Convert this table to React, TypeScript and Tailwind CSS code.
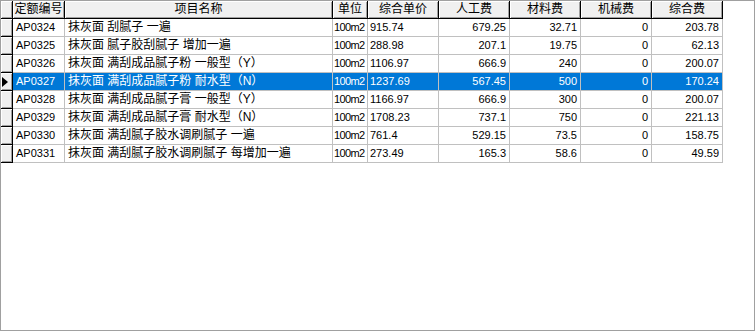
import React from 'react';

type Col = { title: string; width: string; align: string };

const columns: Col[] = [
  { title: '定额编号', width: 'w-[52px]', align: 'text-left pl-[3px] text-[11px]' },
  { title: '项目名称', width: 'w-[268px]', align: 'text-left pl-[3px] text-[12px]' },
  { title: '单位', width: 'w-[35px]', align: 'text-left pl-[1px] text-[11px] tracking-[-0.6px]' },
  { title: '综合单价', width: 'w-[71px]', align: 'text-left pl-[2px] text-[11px]' },
  { title: '人工费', width: 'w-[71px]', align: 'text-right pr-[3px] text-[11px]' },
  { title: '材料费', width: 'w-[71px]', align: 'text-right pr-[3px] text-[11px]' },
  { title: '机械费', width: 'w-[71px]', align: 'text-right pr-[3px] text-[11px]' },
  { title: '综合费', width: 'w-[71px]', align: 'text-right pr-[3px] text-[11px]' },
];

const rows: string[][] = [
  ['AP0324', '抹灰面 刮腻子 一遍', '100m2', '915.74', '679.25', '32.71', '0', '203.78'],
  ['AP0325', '抹灰面 腻子胶刮腻子 增加一遍', '100m2', '288.98', '207.1', '19.75', '0', '62.13'],
  ['AP0326', '抹灰面 满刮成品腻子粉 一般型（Y）', '100m2', '1106.97', '666.9', '240', '0', '200.07'],
  ['AP0327', '抹灰面 满刮成品腻子粉 耐水型（N）', '100m2', '1237.69', '567.45', '500', '0', '170.24'],
  ['AP0328', '抹灰面 满刮成品腻子膏 一般型（Y）', '100m2', '1166.97', '666.9', '300', '0', '200.07'],
  ['AP0329', '抹灰面 满刮成品腻子膏 耐水型（N）', '100m2', '1708.23', '737.1', '750', '0', '221.13'],
  ['AP0330', '抹灰面 满刮腻子胶水调刷腻子 一遍', '100m2', '761.4', '529.15', '73.5', '0', '158.75'],
  ['AP0331', '抹灰面 满刮腻子胶水调刷腻子 每增加一遍', '100m2', '273.49', '165.3', '58.6', '0', '49.59'],
];

const selected = 3;

const fixedCell =
  'shrink-0 h-[18px] bg-[#f0f0f0] border-r border-b border-black shadow-[inset_1px_1px_0_#ffffff,inset_-1px_-1px_0_#a0a0a0]';

export default function App() {
  return (
    <div
      className="w-[755px] h-[331px] bg-white border border-[#a0a0a0] overflow-hidden text-black"
      style={{ fontFamily: '"Liberation Sans", "Noto Sans CJK SC", sans-serif' }}
    >
      {/* header */}
      <div className="flex">
        <div className={`${fixedCell} w-[12px]`} />
        {columns.map((c) => (
          <div
            key={c.title}
            className={`${fixedCell} ${c.width} text-center text-[12px] leading-[17px] whitespace-nowrap overflow-hidden`}
          >
            {c.title}
          </div>
        ))}
      </div>

      {/* body */}
      {rows.map((r, i) => {
        const isSel = i === selected;
        return (
          <div key={r[0]} className="flex">
            <div className={`${fixedCell} w-[12px] flex items-center`}>
              {isSel && (
                <svg width="8" height="10" viewBox="0 0 8 10" className="ml-[1px]">
                  <polygon points="0,0 6,5 0,10" fill="#000" />
                </svg>
              )}
            </div>
            {r.map((v, j) => (
              <div
                key={j}
                className={`shrink-0 h-[18px] border-r border-b border-[#c0c0c0] leading-[17px] whitespace-nowrap overflow-hidden ${
                  columns[j].width
                } ${columns[j].align} ${isSel ? 'bg-[#0078d7] text-white' : ''}`}
              >
                {v}
              </div>
            ))}
          </div>
        );
      })}
    </div>
  );
}
